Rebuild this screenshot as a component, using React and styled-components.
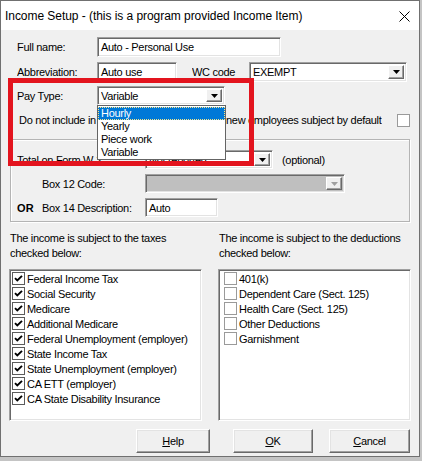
import React from "react";
import styled, { createGlobalStyle } from "styled-components";

const GlobalStyle = createGlobalStyle`
  html, body {
    margin: 0;
    padding: 0;
  }
  body {
    width: 422px;
    height: 461px;
    overflow: hidden;
    background: #c4c4c4;
    font-family: "Liberation Sans", Arial, sans-serif;
  }
`;

const Window = styled.div`
  position: relative;
  width: 420px;
  height: 457px;
  box-sizing: border-box;
  border: 1px solid #707070;
  background: #f0f0f0;
  font-size: 11px;
  letter-spacing: -0.3px;
  color: #000;
`;

const TitleBar = styled.div`
  height: 29px;
  background: #fff;
  display: flex;
  align-items: center;
  justify-content: space-between;
  padding-left: 4px;
  font-size: 12px;
  letter-spacing: -0.05px;
`;

const CloseButton = styled.div`
  width: 30px;
  height: 29px;
  display: flex;
  align-items: center;
  justify-content: center;
  padding-top: 2px;
  box-sizing: border-box;
`;

const Body = styled.div`
  padding: 7px 9px 2px 8px;
`;

const FieldRow = styled.div`
  display: flex;
  align-items: center;
  height: ${(p) => p.$h || 20}px;
  margin-top: ${(p) => p.$gap || 0}px;
  padding-left: ${(p) => (p.$indent ?? 8)}px;
`;

const Label = styled.span`
  flex: none;
  width: ${(p) => (p.$w ? `${p.$w}px` : "auto")};
  max-width: ${(p) => (p.$clip ? `${p.$clip}px` : "none")};
  margin-left: ${(p) => p.$ml || 0}px;
  white-space: nowrap;
  overflow: hidden;
`;

const Bold = styled.span`
  flex: none;
  width: 25px;
  font-weight: bold;
  letter-spacing: 0.2px;
`;

const sunken = `
  box-sizing: border-box;
  border: 1px solid;
  border-color: #a0a0a0 #fff #fff #a0a0a0;
  box-shadow: inset 1px 1px 0 #696969, inset -1px -1px 0 #e3e3e3;
`;

const TextBox = styled.div`
  ${sunken}
  width: ${(p) => p.$w}px;
  height: ${(p) => p.$h || 20}px;
  background: #fff;
  display: flex;
  align-items: center;
  padding-left: 3px;
  white-space: nowrap;
  overflow: hidden;
`;

const Combo = styled.div`
  ${sunken}
  width: ${(p) => p.$w}px;
  height: ${(p) => p.$h || 20}px;
  background: ${(p) => (p.$disabled ? "#bfbfbf" : "#fff")};
  display: flex;
  align-items: center;
  padding: 2px 2px 2px 3px;
`;

const ComboText = styled.span`
  flex: 1;
  white-space: nowrap;
  overflow: hidden;
`;

const DropButton = styled.span`
  flex: none;
  width: 16px;
  height: 100%;
  box-sizing: border-box;
  background: #f0f0f0;
  border: 1px solid;
  border-color: #fff #696969 #696969 #fff;
  box-shadow: inset -1px -1px 0 #a0a0a0;
  display: flex;
  align-items: center;
  justify-content: center;
`;

const Check = styled.span`
  flex: none;
  width: 13px;
  height: 13px;
  box-sizing: border-box;
  border: 1px solid ${(p) => (p.$light ? "#9a9a9a" : "#5c5c5c")};
  background: #fff;
  display: flex;
  align-items: center;
  justify-content: center;
`;

const Spacer = styled.span`
  flex: 1;
`;

const GroupBox = styled.div`
  margin: 11px 0 0 1px;
  width: 400px;
  height: 83px;
  box-sizing: border-box;
  border: 1px solid #b4b4b4;
  box-shadow: inset 1px 1px 0 #fff, 1px 1px 0 #fff;
  padding: 10px 0 0 6px;
`;

const Columns = styled.div`
  display: grid;
  grid-template-columns: 193px 193px;
  column-gap: 16px;
  margin-top: 9px;
`;

const Heading = styled.div`
  height: 30px;
  line-height: 15px;
  padding-left: 1px;
`;

const ListBox = styled.div`
  ${sunken}
  margin-top: 8px;
  height: 152px;
  background: #fff;
  padding: 1px 0 0 2px;
`;

const ListItem = styled.div`
  height: 15px;
  display: flex;
  align-items: center;
  gap: 2px;
  white-space: nowrap;
  padding-left: ${(p) => p.$pl || 0}px;
`;

const ButtonRow = styled.div`
  display: flex;
  justify-content: flex-end;
  margin-top: 8px;
`;

const PushButton = styled.button`
  width: ${(p) => p.$w}px;
  height: 24px;
  margin-right: ${(p) => p.$mr || 0}px;
  background: #f0f0f0;
  border: 1px solid;
  border-color: #fff #696969 #696969 #fff;
  box-shadow: inset -1px -1px 0 #a0a0a0, inset 1px 1px 0 #e3e3e3;
  font-family: inherit;
  font-size: 11px;
  letter-spacing: -0.3px;
  color: #000;
  padding: 0;
`;

const Mnemonic = styled.span`
  text-decoration: underline;
`;

const DropList = styled.div`
  position: absolute;
  left: 96px;
  top: 104px;
  width: 129px;
  height: 55px;
  box-sizing: border-box;
  border: 1px solid #646464;
  background: #fff;
  padding-top: 1px;
`;

const DropItem = styled.div`
  height: 13px;
  line-height: 13px;
  padding-left: 3px;
  box-sizing: border-box;
  background: ${(p) => (p.$active ? "#0078d7" : "transparent")};
  color: ${(p) => (p.$active ? "#fff" : "#000")};
  outline: ${(p) => (p.$active ? "1px dotted #f6e68a" : "none")};
  outline-offset: -1px;
`;

const Highlight = styled.div`
  position: absolute;
  left: 7px;
  top: 77px;
  width: 246px;
  height: 88px;
  box-sizing: border-box;
  border: 5px solid #e3141e;
  pointer-events: none;
`;

const Arrow = ({ disabled }) => (
  <svg width="7" height="4" viewBox="0 0 7 4">
    <path d="M0 0h7L3.5 4z" fill={disabled ? "#a0a0a0" : "#000"} />
  </svg>
);

const Tick = () => (
  <svg width="9" height="9" viewBox="0 0 9 9">
    <path d="M1 4.2l2.3 2.3L8 1.8" fill="none" stroke="#000" strokeWidth="1.9" />
  </svg>
);

const taxes = [
  "Federal Income Tax",
  "Social Security",
  "Medicare",
  "Additional Medicare",
  "Federal Unemployment (employer)",
  "State Income Tax",
  "State Unemployment (employer)",
  "CA ETT (employer)",
  "CA State Disability Insurance",
];

const deductions = [
  "401(k)",
  "Dependent Care (Sect. 125)",
  "Health Care (Sect. 125)",
  "Other Deductions",
  "Garnishment",
];

const payTypes = ["Hourly", "Yearly", "Piece work", "Variable"];

export default function App() {
  return (
    <>
      <GlobalStyle />
      <Window>
        <TitleBar>
          <span>Income Setup - (this is a program provided Income Item)</span>
          <CloseButton>
            <svg width="11" height="11" viewBox="0 0 11 11">
              <path d="M0.5 0.5l10 10M10.5 0.5l-10 10" stroke="#000" strokeWidth="1" />
            </svg>
          </CloseButton>
        </TitleBar>

        <Body>
          <FieldRow>
            <Label $w={80}>Full name:</Label>
            <TextBox $w={184}>Auto - Personal Use</TextBox>
          </FieldRow>
          <FieldRow $gap={5}>
            <Label $w={80}>Abbreviation:</Label>
            <TextBox $w={80}>Auto use</TextBox>
            <Label $w={57} $ml={15}>WC code</Label>
            <Combo $w={158}>
              <ComboText>EXEMPT</ComboText>
              <DropButton><Arrow /></DropButton>
            </Combo>
          </FieldRow>
          <FieldRow $gap={4} $h={19}>
            <Label $w={80}>Pay Type:</Label>
            <Combo $w={128} $h={19}>
              <ComboText>Variable</ComboText>
              <DropButton><Arrow /></DropButton>
            </Combo>
          </FieldRow>
          <FieldRow $gap={7} $h={16} $indent={10}>
            <Label $w={207}>Do not include in</Label>
            <Label>new employees subject by default</Label>
            <Spacer />
            <Check $light />
          </FieldRow>

          <GroupBox>
            <FieldRow $h={19} $indent={0}>
              <Label $w={128}>
                <Label $clip={79}>Total on Form W-2:</Label>
              </Label>
              <Combo $w={128} $h={19}>
                <ComboText>Not reported</ComboText>
                <DropButton><Arrow /></DropButton>
              </Combo>
              <Label $ml={9}>(optional)</Label>
            </FieldRow>
            <FieldRow $h={19} $gap={5} $indent={0}>
              <Bold />
              <Label $w={103}>Box 12 Code:</Label>
              <Combo $w={200} $h={19} $disabled>
                <ComboText />
                <DropButton><Arrow disabled /></DropButton>
              </Combo>
            </FieldRow>
            <FieldRow $h={19} $gap={5} $indent={0}>
              <Bold>OR</Bold>
              <Label $w={103}>Box 14 Description:</Label>
              <TextBox $w={73} $h={19}>Auto</TextBox>
            </FieldRow>
          </GroupBox>

          <Columns>
            <div>
              <Heading>The income is subject to the taxes<br />checked below:</Heading>
              <ListBox>
                {taxes.map((t) => (
                  <ListItem key={t}>
                    <Check><Tick /></Check>
                    <span>{t}</span>
                  </ListItem>
                ))}
              </ListBox>
            </div>
            <div>
              <Heading>The income is subject to the deductions<br />checked below:</Heading>
              <ListBox>
                {deductions.map((d) => (
                  <ListItem key={d} $pl={3}>
                    <Check $light />
                    <span>{d}</span>
                  </ListItem>
                ))}
              </ListBox>
            </div>
          </Columns>

          <ButtonRow>
            <PushButton $w={74} $mr={23}><Mnemonic>H</Mnemonic>elp</PushButton>
            <PushButton $w={80} $mr={16}><Mnemonic>O</Mnemonic>K</PushButton>
            <PushButton $w={81}><Mnemonic>C</Mnemonic>ancel</PushButton>
          </ButtonRow>
        </Body>

        <DropList>
          {payTypes.map((p) => (
            <DropItem key={p} $active={p === "Hourly"}>{p}</DropItem>
          ))}
        </DropList>
        <Highlight />
      </Window>
    </>
  );
}
